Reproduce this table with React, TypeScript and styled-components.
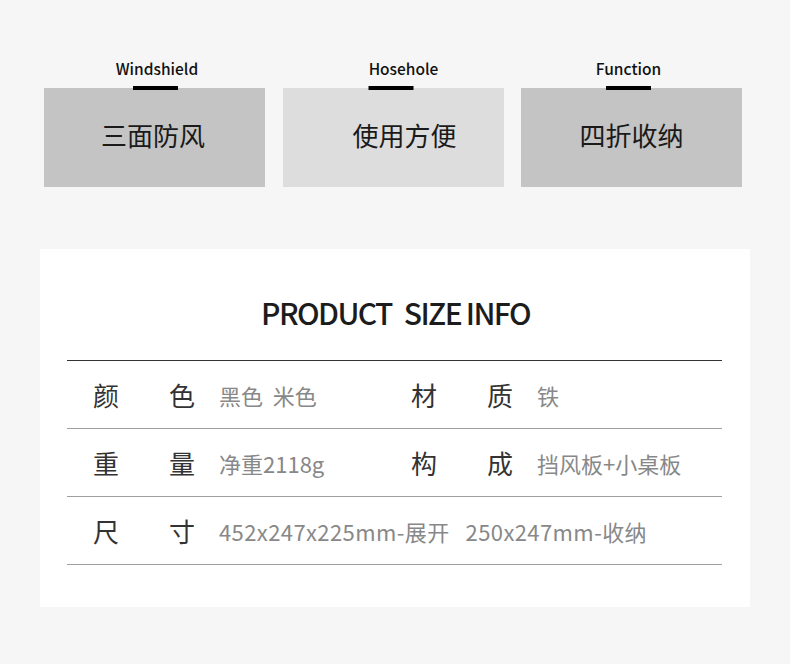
import styled, { createGlobalStyle } from "styled-components";

const GlobalStyle = createGlobalStyle`
  html, body {
    margin: 0;
    padding: 0;
    background: #f6f6f6;
  }
  body {
    font-family: "Noto Sans CJK SC", "Noto Sans", sans-serif;
    width: 790px;
    height: 664px;
    overflow: hidden;
  }
`;

const Page = styled.div`
  padding: 61px 40px 0 40px;
`;

const Features = styled.div`
  display: grid;
  grid-template-columns: 221px 221px 221px;
  column-gap: 17.5px;
  padding-left: 4px;
`;

const Feature = styled.div`
  display: flex;
  flex-direction: column;
`;

const Caption = styled.div<{ $shift: number }>`
  display: flex;
  flex-direction: column;
  align-items: center;
  transform: translateX(${(p) => p.$shift}px);
`;

const CaptionText = styled.span`
  font-size: 15.5px;
  line-height: 15px;
  font-weight: 500;
  color: #111;
`;

const Bar = styled.span<{ $offset: number }>`
  display: block;
  width: 45px;
  height: 4px;
  margin-top: 10px;
  margin-bottom: -2px;
  background: #000;
  position: relative;
  z-index: 1;
  transform: translateX(${(p) => p.$offset}px);
`;

const Card = styled.div<{ $light: boolean; $shift: number }>`
  height: 99px;
  display: flex;
  align-items: center;
  justify-content: center;
  background: ${(p) => (p.$light ? "#dddddd" : "#c4c4c4")};
  font-size: 26px;
  color: #1a1a1a;
  padding-left: ${(p) => Math.max(0, p.$shift * 2)}px;
  padding-right: ${(p) => Math.max(0, -p.$shift * 2)}px;
  padding-bottom: 6px;
  box-sizing: border-box;
`;

const Panel = styled.div`
  margin-top: 62px;
  background: #fff;
  height: 358px;
  padding: 48px 28px 0 27px;
  box-sizing: border-box;
`;

const Title = styled.h2`
  margin: 0;
  display: flex;
  justify-content: center;
  gap: 12px;
  font-size: 30px;
  line-height: 30px;
  font-weight: 500;
  color: #1c1c1c;
  letter-spacing: -1.6px;
  word-spacing: -0.5px;
  padding-left: 2px;
`;

const Table = styled.div`
  margin-top: 33px;
  border-top: 1px solid #333;
`;

const Row = styled.div`
  height: 67px;
  display: grid;
  grid-template-columns: 318px 1fr;
  align-items: center;
  padding-left: 26px;
  border-bottom: 1px solid #a0a0a0;
`;

const Cell = styled.div<{ $wide?: boolean }>`
  display: flex;
  align-items: center;
  grid-column: ${(p) => (p.$wide ? "1 / span 2" : "auto")};
`;

const Label = styled.span`
  width: 102px;
  display: flex;
  justify-content: space-between;
  font-size: 26px;
  color: #333;
  flex-shrink: 0;
`;

const Value = styled.span<{ $spaced?: boolean }>`
  margin-left: 24px;
  font-size: 22px;
  color: #888;
  white-space: pre;
  letter-spacing: ${(p) => (p.$spaced ? "0.4px" : "0")};
`;

const features = [
  { en: "Windshield", zh: "三面防风", light: false, shift: 2.5, bar: -1.5, cardShift: -1.5 },
  { en: "Hosehole", zh: "使用方便", light: true, shift: 10.5, bar: -13, cardShift: 11.5 },
  { en: "Function", zh: "四折收纳", light: false, shift: -3, bar: 0, cardShift: 0 },
];

const rows = [
  [
    { k: ["颜", "色"], v: "黑色  米色" },
    { k: ["材", "质"], v: "铁" },
  ],
  [
    { k: ["重", "量"], v: "净重2118g" },
    { k: ["构", "成"], v: "挡风板+小桌板" },
  ],
  [{ k: ["尺", "寸"], v: "452x247x225mm-展开   250x247mm-收纳" }],
];

export default function App() {
  return (
    <>
      <GlobalStyle />
      <Page>
        <Features>
          {features.map((f) => (
            <Feature key={f.en}>
              <Caption $shift={f.shift}>
                <CaptionText>{f.en}</CaptionText>
                <Bar $offset={f.bar} />
              </Caption>
              <Card $light={f.light} $shift={f.cardShift}>
                {f.zh}
              </Card>
            </Feature>
          ))}
        </Features>
        <Panel>
          <Title>
            <span>PRODUCT</span>
            <span>SIZE INFO</span>
          </Title>
          <Table>
            {rows.map((row, i) => (
              <Row key={i}>
                {row.map((c) => (
                  <Cell key={c.k.join("")} $wide={row.length === 1}>
                    <Label>
                      <span>{c.k[0]}</span>
                      <span>{c.k[1]}</span>
                    </Label>
                    <Value $spaced={row.length === 1}>{c.v}</Value>
                  </Cell>
                ))}
              </Row>
            ))}
          </Table>
        </Panel>
      </Page>
    </>
  );
}
